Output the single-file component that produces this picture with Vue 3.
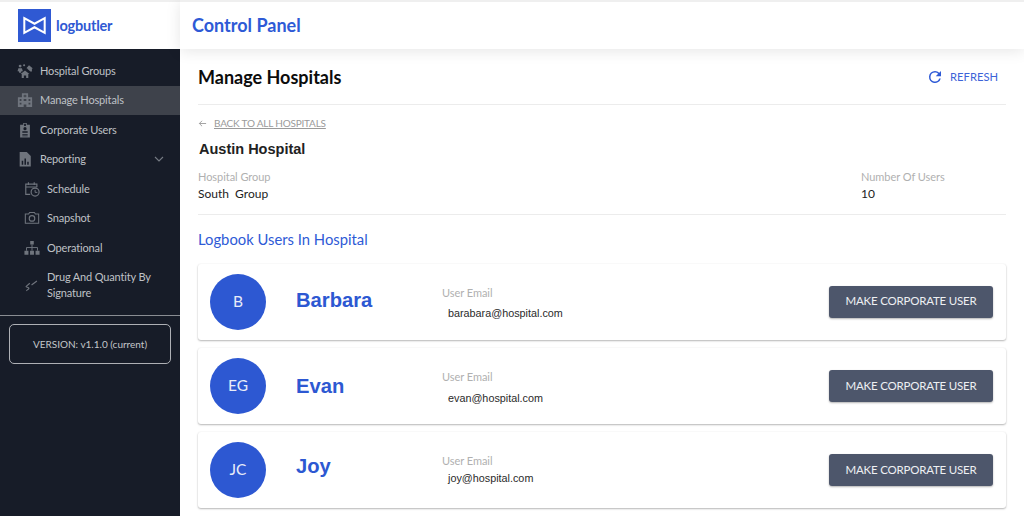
<script setup>
const nav = [
  { label: 'Hospital Groups', icon: 'groups' },
  { label: 'Manage Hospitals', icon: 'hospital', active: true },
  { label: 'Corporate Users', icon: 'badge' },
  { label: 'Reporting', icon: 'report', chevron: true },
  { label: 'Schedule', icon: 'schedule', sub: true },
  { label: 'Snapshot', icon: 'camera', sub: true },
  { label: 'Operational', icon: 'org', sub: true },
  { label: 'Drug And Quantity By Signature', icon: 'sign', sub: true, tall: true }
]
const users = [
  { initials: 'B', name: 'Barbara', email: 'barabara@hospital.com', row: 'row-a' },
  { initials: 'EG', name: 'Evan', email: 'evan@hospital.com', row: 'row-b' },
  { initials: 'JC', name: 'Joy', email: 'joy@hospital.com', row: 'row-c' }
]
</script>

<template>
  <div class="app">
    <aside class="side">
      <div class="brand">
        <div class="logo">
          <svg viewBox="0 0 34 34" width="33" height="33">
            <rect width="34" height="34" fill="#2f59d3" />
            <path d="M6.5 9.5 L17 15.2 L27.5 9.5 V24.5 L17 18.8 L6.5 24.5 Z" fill="none" stroke="#fff" stroke-width="2.1" stroke-linejoin="miter" />
          </svg>
        </div>
        <span class="brand-name">logbutler</span>
      </div>
      <nav class="nav">
        <div v-for="n in nav" :key="n.label" class="item" :class="{ active: n.active, sub: n.sub, tall: n.tall }">
          <svg class="ico" viewBox="0 0 18 18" width="18" height="18" fill="#6f747d">
            <template v-if="n.icon === 'groups'">
              <path d="M9 8.5 L14 12.5 H12.7 V17 H10.3 V14 H7.7 V17 H5.3 V12.5 H4 Z" />
              <path d="M13.5 2.5 L18 6.3 H16.8 V9.5 H15 L11.6 6.6 V6 H10.5 Z" />
              <circle cx="3.5" cy="3.5" r="1.6" /><circle cx="8" cy="2.5" r="1.2" />
              <path d="M1.5 6 H5.5 L6.6 9.2 H5 L4.6 11 H2.4 L2 9.2 H.6 Z" />
            </template>
            <template v-else-if="n.icon === 'hospital'">
              <path fill-rule="evenodd" d="M5.5 1.5 H12.5 V6 H17 V17 H10.5 V14 H7.5 V17 H1 V6 H5.5 Z M8.3 3 V4 H7.3 V5 H8.3 V6 H9.7 V5 H10.7 V4 H9.7 V3 Z M3 8 V10 H5 V8 Z M7.5 8 V10 H10.5 V8 Z M13 8 V10 H15 V8 Z M3 12 V14 H5 V12 Z M13 12 V14 H15 V12 Z" />
            </template>
            <template v-else-if="n.icon === 'badge'">
              <path fill-rule="evenodd" d="M3.5 3 H7 V1 H11 V3 H14.5 V17.5 H3.5 Z M8 2 V4.5 H10 V2 Z M7.2 7.5 A1.8 1.8 0 1 0 10.8 7.5 A1.8 1.8 0 1 0 7.2 7.5 Z M6 10.5 V12.2 H12 V10.5 Z M6 13.4 V14.4 H12 V13.4 Z M6 15.3 V16 H12 V15.3 Z" />
            </template>
            <template v-else-if="n.icon === 'report'">
              <path fill-rule="evenodd" d="M3 1 H11 L15.5 5.5 V17.5 H3 Z M5.3 11 V15.5 H7 V11 Z M8.4 8.5 V15.5 H10.1 V8.5 Z M11.5 12 V15.5 H13.2 V12 Z" />
            </template>
            <template v-else-if="n.icon === 'schedule'">
              <path d="M14.5 7 V3.5 H2 V15 H7 M2 6.8 H14.5 M5 1.5 V4.5 M11.5 1.5 V4.5" fill="none" stroke="#6f747d" stroke-width="1.3" />
              <circle cx="12.5" cy="12.5" r="4.5" fill="none" stroke="#6f747d" stroke-width="1.3" />
              <path d="M12.5 10 V12.8 H15" fill="none" stroke="#6f747d" stroke-width="1.1" />
            </template>
            <template v-else-if="n.icon === 'camera'">
              <path d="M1.5 4.5 H5.2 L6.3 2.8 H11.7 L12.8 4.5 H16.5 V15 H1.5 Z" fill="none" stroke="#6f747d" stroke-width="1.2" />
              <circle cx="9" cy="9.5" r="3.1" fill="none" stroke="#6f747d" stroke-width="1.3" />
            </template>
            <template v-else-if="n.icon === 'org'">
              <path d="M7 1 H11 V5 H7 Z M.5 12 H5 V16.5 H.5 Z M6.8 12 H11.2 V16.5 H6.8 Z M13 12 H17.5 V16.5 H13 Z" />
              <path d="M9 5 V12 M2.8 12 V8.5 H15.2 V12" fill="none" stroke="#6f747d" stroke-width="1.1" />
            </template>
            <template v-else>
              <path d="M6.5 7 L2.5 10.5 C1.5 11.5 6 11.5 5.5 13 C5 14.5 2.5 14.5 3 15.7 M8.5 9 L14.5 4.5" fill="none" stroke="#6f747d" stroke-width="1.3" />
            </template>
          </svg>
          <span class="label">{{ n.label }}</span>
          <svg v-if="n.chevron" class="chev" viewBox="0 0 10 6" width="10" height="6"><path d="M1 1 L5 5 L9 1" fill="none" stroke="#767b84" stroke-width="1.1" /></svg>
        </div>
      </nav>
      <div class="side-rule"></div>
      <div class="version">VERSION: v1.1.0 (current)</div>
    </aside>

    <main class="main">
      <header class="topbar">Control Panel</header>
      <section class="content">
        <div class="head">
          <h1>Manage Hospitals</h1>
          <div class="refresh">
            <svg viewBox="0 0 24 24" width="18" height="18"><path d="M17.65 6.35A7.96 7.96 0 0 0 12 4a8 8 0 1 0 7.73 10h-2.08A6 6 0 1 1 12 6c1.66 0 3.14.69 4.22 1.78L13 11h7V4l-2.35 2.35z" fill="#2e5ad6" /></svg>
            <span>REFRESH</span>
          </div>
        </div>
        <div class="back">
          <svg viewBox="0 0 10 10" width="9" height="9"><path d="M9 5 H1.5 M4.5 2 L1.5 5 L4.5 8" fill="none" stroke="#9a9a9a" stroke-width="1" /></svg>
          <span>BACK TO ALL HOSPITALS</span>
        </div>
        <h2 class="hospital">Austin Hospital</h2>
        <div class="meta">
          <div>
            <div class="muted">Hospital Group</div>
            <div class="value">South&nbsp; Group</div>
          </div>
          <div class="meta-right">
            <div class="muted">Number Of Users</div>
            <div class="value">10</div>
          </div>
        </div>
        <h3 class="section">Logbook Users In Hospital</h3>
        <div class="cards">
          <article v-for="u in users" :key="u.name" class="card" :class="u.row">
            <div class="avatar">{{ u.initials }}</div>
            <div class="name">{{ u.name }}</div>
            <div class="mail">
              <div class="muted">User Email</div>
              <div class="addr">{{ u.email }}</div>
            </div>
            <button class="btn">MAKE CORPORATE USER</button>
          </article>
        </div>
      </section>
    </main>
  </div>
</template>

<style scoped>
.app { display: flex; width: 1024px; height: 516px; overflow: hidden; font-family: Lato, "Open Sans", sans-serif; background: #fff; }
.side { width: 180px; flex: none; background: #171c28; display: flex; flex-direction: column; }
.brand { height: 49px; background: #fff; border-top: 2px solid #efefef; box-sizing: border-box; display: flex; align-items: center; padding-left: 18px; }
.logo { width: 33px; height: 33px; }
.logo svg { display: block; }
.brand-name { margin-left: 5px; font-size: 14.5px; font-weight: 700; color: #2f59d3; letter-spacing: -0.2px; }
.nav { padding-top: 7px; }
.item { height: 29.5px; display: flex; align-items: center; padding-left: 17px; color: #bfc1c6; font-size: 11px; letter-spacing: -0.15px; }
.item.active { background: #3e424b; }
.item.sub { padding-left: 24px; }
.item.tall { height: 44px; }
.ico { flex: none; width: 16px; height: 16px; margin-right: 7px; }
.label { line-height: 16px; }
.chev { margin-left: auto; margin-right: 16px; }
.tall .label { width: 118px; }
.side-rule { height: 1px; background: #8a8d93; margin-top: 8px; }
.version { margin: 8px 9px 0; height: 40px; box-sizing: border-box; border: 1px solid #aeb0b5; border-radius: 5px; color: #c4c6ca; font-size: 10px; display: flex; align-items: center; justify-content: center; }
.main { flex: 1; min-width: 0; display: flex; flex-direction: column; }
.topbar { height: 49px; box-sizing: border-box; flex: none; border-top: 2px solid #efefef; padding: 0 0 2px 12px; display: flex; align-items: center; font-size: 18px; font-weight: 700; color: #2e5ad6; box-shadow: 0 2px 14px rgba(0, 0, 0, .1); background: #fff; }
.content { padding: 0 18px; }
.head { height: 56px; box-sizing: border-box; display: flex; align-items: center; justify-content: space-between; border-bottom: 1px solid #ececec; padding-top: 1px; }
h1 { margin: 0; font-size: 18px; font-weight: 700; color: #0c0c0c; }
.refresh { display: flex; align-items: center; gap: 6px; margin-right: 8px; color: #3c63d8; font-size: 11.2px; }
.refresh span { margin-bottom: 2px; }
.back { display: flex; align-items: center; gap: 7px; margin-top: 11px; height: 14px; color: #9a9a9a; font-size: 10px; letter-spacing: -0.2px; }
.back span { text-decoration: underline; }
.hospital { margin: 10px 0 0 1px; font-family: "Liberation Sans", Arial, sans-serif; font-size: 14.5px; line-height: 18px; font-weight: 700; color: #222; }
.meta { display: flex; justify-content: space-between; margin-top: 12px; padding-bottom: 12px; border-bottom: 1px solid #ececec; }
.meta-right { width: 145px; }
.muted { color: #b0b0b0; font-size: 11px; letter-spacing: -0.05px; line-height: 14px; }
.value { margin-top: 2px; color: #1c1c1c; font-size: 12px; line-height: 16px; }
.section { margin: 15px 0 0; font-size: 14.8px; line-height: 18px; font-weight: 400; color: #2e5ad6; }
.cards { display: flex; flex-direction: column; gap: 8px; margin-top: 16px; }
.card { height: 76px; box-sizing: border-box; display: flex; align-items: center; border-radius: 3px; background: #fff; box-shadow: 0 1px 2px rgba(0, 0, 0, .28), 0 0 2px rgba(0, 0, 0, .06); padding: 0 13px 0 12px; }
.avatar { width: 56px; height: 56px; flex: none; box-sizing: border-box; padding-bottom: 2px; border-radius: 50%; background: #2d58d2; color: #e8ecf8; font-size: 15.5px; display: flex; align-items: center; justify-content: center; }
.name { width: 146px; margin-left: 30px; font-family: "Liberation Sans", Arial, sans-serif; font-size: 20.2px; font-weight: 700; color: #2d58d2; flex: none; }
.mail { flex: 1; }
.addr { margin-left: 6px; font-family: "Liberation Sans", Arial, sans-serif; font-size: 10.8px; line-height: 14px; color: #2a2a2a; }
.row-a .name { margin-bottom: 4px; }
.row-a .mail { margin-top: 2px; }
.row-a .addr { margin-top: 6px; }
.row-a .btn { margin-bottom: 1px; }
.row-b .mail { margin-top: 2px; }
.row-b .addr { margin-top: 7px; }
.row-c .name { margin-bottom: 8px; }
.row-c .mail { margin-bottom: 2px; }
.row-c .addr { margin-top: 3px; }
.btn { width: 164px; height: 32px; flex: none; border: 0; border-radius: 3px; background: #4d566b; color: #eef0f3; font-family: Lato, sans-serif; font-size: 11.5px; letter-spacing: -0.2px; padding: 0 0 2px; box-shadow: 0 1px 2px rgba(0, 0, 0, .3); }
</style>
